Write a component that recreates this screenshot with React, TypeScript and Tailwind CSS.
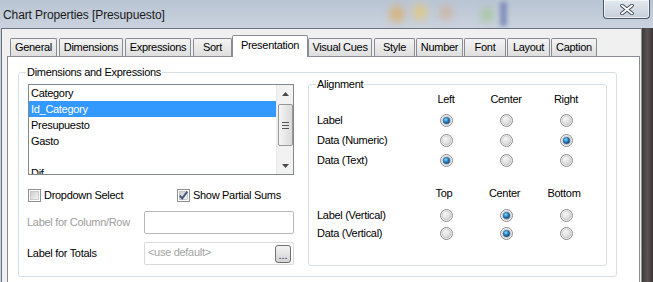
import React from 'react';

const tabs = [
  { label: 'General', cls: 'ml-[8px] w-[47px]' },
  { label: 'Dimensions', cls: 'ml-[2px] w-[64px]' },
  { label: 'Expressions', cls: 'ml-[2px] w-[66px]' },
  { label: 'Sort', cls: 'ml-[2px] w-[39px]' },
  { label: 'Presentation', cls: 'w-[76px]', active: true },
  { label: 'Visual Cues', cls: 'w-[64px]' },
  { label: 'Style', cls: 'ml-[2px] w-[41px]' },
  { label: 'Number', cls: 'ml-[1px] w-[47px]' },
  { label: 'Font', cls: 'ml-[1px] w-[42px]' },
  { label: 'Layout', cls: 'ml-[1px] w-[43px]' },
  { label: 'Caption', cls: 'ml-[1px] w-[46px]' },
];

const fields = ['Category', 'Id_Category', 'Presupuesto', 'Gasto', '', 'Dif'];

const horiz = [
  { label: 'Label', sel: 0 },
  { label: 'Data (Numeric)', sel: 2 },
  { label: 'Data (Text)', sel: 0 },
];

const vert = [
  { label: 'Label (Vertical)', sel: 1 },
  { label: 'Data (Vertical)', sel: 1 },
];

function Radio({ on }: { on?: boolean }) {
  return (
    <svg width="13" height="13" viewBox="0 0 13 13">
      <defs>
        <radialGradient id="rfill" cx="0.35" cy="0.3" r="0.8">
          <stop offset="0" stopColor="#f6f6f6" />
          <stop offset="0.6" stopColor="#e2e2e2" />
          <stop offset="1" stopColor="#c9c9c9" />
        </radialGradient>
        <radialGradient id="rdot" cx="0.4" cy="0.35" r="0.7">
          <stop offset="0" stopColor="#8fdcff" />
          <stop offset="0.45" stopColor="#2b8fd0" />
          <stop offset="1" stopColor="#0c3a66" />
        </radialGradient>
      </defs>
      <circle cx="6.5" cy="6.5" r="6" fill="#fdfdfd" stroke="#8a8c8f" />
      <circle cx="6.5" cy="6.5" r="4.6" fill="url(#rfill)" stroke="#b9b9b9" strokeWidth="0.6" />
      {on && <circle cx="6.5" cy="6.5" r="3.3" fill="url(#rdot)" stroke="#1a4b76" strokeWidth="0.5" />}
    </svg>
  );
}

function Check({ on }: { on?: boolean }) {
  return (
    <svg width="13" height="13" viewBox="0 0 13 13">
      <defs>
        <linearGradient id="cfill" x1="0" y1="0" x2="1" y2="1">
          <stop offset="0" stopColor="#cbcbcb" />
          <stop offset="1" stopColor="#f7f7f7" />
        </linearGradient>
      </defs>
      <rect x="0.5" y="0.5" width="12" height="12" fill="#fbfbfb" stroke="#8e8f8f" />
      <rect x="2.5" y="2.5" width="8" height="8" fill="url(#cfill)" stroke="#b0b0b0" strokeWidth="0.6" />
      {on && <path d="M2.8 6.6 L5.2 9.4 L10.2 2.6" fill="none" stroke="#44587f" strokeWidth="1.9" />}
    </svg>
  );
}

function Arrow({ down }: { down?: boolean }) {
  return (
    <svg width="7" height="4" viewBox="0 0 7 4">
      <path d={down ? 'M0 0 H7 L3.5 4 Z' : 'M0 4 H7 L3.5 0 Z'} fill="#4a4a4a" />
    </svg>
  );
}

export default function App() {
  return (
    <div className="w-[653px] h-[282px] overflow-hidden flex flex-col bg-[#f0f0f0] text-[11px] tracking-[-0.3px] text-black font-['Liberation_Sans',Arial,sans-serif]">
      {/* Title bar */}
      <div className="relative h-[28px] flex items-start justify-between bg-gradient-to-b from-[#b9c4d3] to-[#cad2de] overflow-hidden">
        <div className="absolute left-[390px] top-[6px] w-[14px] h-[16px] rounded-full bg-[#e4a64c] blur-[4px] opacity-70" />
        <div className="absolute left-[414px] top-[4px] w-[12px] h-[16px] rounded-full bg-[#efc85a] blur-[4px] opacity-70" />
        <div className="absolute left-[440px] top-[6px] w-[12px] h-[14px] rounded-full bg-[#dc9d6a] blur-[4px] opacity-50" />
        <div className="absolute left-[482px] top-[8px] w-[10px] h-[14px] rounded-full bg-[#8fc36a] blur-[4px] opacity-60" />
        <div className="absolute left-[500px] top-[2px] w-[7px] h-[24px] bg-[#6a78b0] blur-[2px] opacity-70" />
        <span className="relative pl-[3px] pt-[6px] text-[12px] tracking-[-0.1px] text-[#1a1a1a]">Chart Properties [Presupuesto]</span>
        <div className="relative mr-[3px] w-[47px] h-[19px] rounded-b-[4px] border border-t-0 border-[#4e5866] bg-gradient-to-b from-[#e4e9ef] to-[#c6cfda] shadow-[inset_0_0_0_1px_rgba(255,255,255,0.6)] flex items-center justify-center">
          <svg width="14" height="11" viewBox="0 0 14 11">
            <path d="M2 1.5 L12 9.5 M12 1.5 L2 9.5" stroke="#3a4350" strokeWidth="3.6" strokeLinecap="round" />
            <path d="M2 1.5 L12 9.5 M12 1.5 L2 9.5" stroke="#ffffff" strokeWidth="2" strokeLinecap="round" />
          </svg>
        </div>
      </div>

      {/* Body */}
      <div className="flex-1 flex">
        <div className="w-[2px] bg-[#c8d2de] border-r border-[#69727e]" />
        <div className="flex-1 flex flex-col border-t border-[#6b7480] bg-[#f0f0f0]">
          {/* Tab strip */}
          <div className="mt-[6px] h-[21px] flex items-end">
            {tabs.map((t) =>
              t.active ? (
                <div
                  key={t.label}
                  className={`${t.cls} relative z-10 -mb-px h-[22px] border border-b-0 border-[#898c95] rounded-t-[2px] bg-white flex items-center justify-center pb-[2px]`}
                >
                  {t.label}
                </div>
              ) : (
                <div
                  key={t.label}
                  className={`${t.cls} h-[18px] border border-b-0 border-[#898c95] rounded-t-[2px] bg-gradient-to-b from-[#f4f4f4] to-[#dedede] flex items-center justify-center`}
                >
                  {t.label}
                </div>
              )
            )}
          </div>

          {/* Tab page */}
          <div className="flex-1 ml-[5px] mr-[1px] border border-b-0 border-[#898c95] bg-white">
            <div className="relative ml-[10px] mt-[15px] w-[599px] h-[205px] border border-[#d5dfe5] rounded-[3px]">
              <span className="absolute -top-[8px] left-[7px] bg-white px-[1px] leading-[14px]">Dimensions and Expressions</span>

              <div className="flex pl-[9px] pt-[11px]">
                {/* Left column */}
                <div className="w-[266px] flex flex-col">
                  <div className="h-[91px] border border-[#828790] flex overflow-hidden">
                    <div className="flex-1 flex flex-col">
                      {fields.map((f, i) => (
                        <div
                          key={i}
                          className={`h-[16px] shrink-0 pl-[2px] flex items-center ${i === 1 ? 'bg-[#3399ff] text-white' : ''}`}
                        >
                          {f}
                        </div>
                      ))}
                    </div>
                    <div className="w-[17px] bg-[#f2f2f2] border-l border-[#e8e8e8] flex flex-col items-center">
                      <div className="h-[17px] w-full flex items-center justify-center">
                        <Arrow />
                      </div>
                      <div className="mt-[2px] h-[42px] w-[15px] rounded-[2px] border border-[#979797] bg-gradient-to-r from-[#f5f5f5] to-[#dadada] flex flex-col items-center justify-center gap-[2px]">
                        <div className="w-[7px] h-[1px] bg-[#555]" />
                        <div className="w-[7px] h-[1px] bg-[#555]" />
                        <div className="w-[7px] h-[1px] bg-[#555]" />
                      </div>
                      <div className="flex-1" />
                      <div className="h-[17px] w-full flex items-center justify-center">
                        <Arrow down />
                      </div>
                    </div>
                  </div>

                  <div className="mt-[12px] h-[13px] grid grid-cols-[149px_1fr]">
                    <div className="flex items-center gap-[3px]">
                      <Check />
                      <span>Dropdown Select</span>
                    </div>
                    <div className="flex items-center gap-[3px]">
                      <Check on />
                      <span>Show Partial Sums</span>
                    </div>
                  </div>

                  <div className="mt-[11px] flex items-center -ml-px">
                    <span className="w-[117px] text-[#9d9d9d]">Label for Column/Row</span>
                    <div className="w-[150px] h-[23px] border border-[#b8b8b8] rounded-[2px] bg-white" />
                  </div>

                  <div className="mt-[8px] flex items-center -ml-px">
                    <span className="w-[117px]">Label for Totals</span>
                    <div className="w-[150px] h-[23px] border border-[#d9d9d9] rounded-[2px] bg-white flex items-center justify-between pl-[3px] pr-[2px]">
                      <span className="text-[#a3a3a3] -mt-[3px]">&lt;use default&gt;</span>
                      <div className="w-[16px] h-[18px] rounded-[3px] border border-[#707070] bg-gradient-to-b from-[#f3f3f3] to-[#d4d4d4] flex items-end justify-center pb-[3px]">
                        <span className="text-[#1e2a5a] leading-[8px] tracking-[0px]">...</span>
                      </div>
                    </div>
                  </div>
                </div>

                {/* Alignment group */}
                <div className="relative ml-[14px] w-[299px] h-[182px] border border-[#d5dfe5] rounded-[3px]">
                  <span className="absolute -top-[8px] left-[7px] bg-white px-[1px] leading-[14px]">Alignment</span>
                  <div className="pl-[8px] pt-[6px]">
                    <div className="grid grid-cols-[99px_60px_60px_60px] h-[16px] items-center">
                      <span />
                      <span className="text-center">Left</span>
                      <span className="text-center">Center</span>
                      <span className="text-center">Right</span>
                    </div>
                    <div className="mt-[3px]">
                      {horiz.map((r) => (
                        <div key={r.label} className="grid grid-cols-[99px_60px_60px_60px] h-[20px] items-center">
                          <span>{r.label}</span>
                          {[0, 1, 2].map((c) => (
                            <div key={c} className="flex justify-center">
                              <Radio on={r.sel === c} />
                            </div>
                          ))}
                        </div>
                      ))}
                    </div>
                    <div className="mt-[15px] grid grid-cols-[99px_60px_60px_60px] h-[16px] items-center">
                      <span />
                      <span className="text-center pr-[4px]">Top</span>
                      <span className="text-center pr-[3px]">Center</span>
                      <span className="text-center pr-[4px]">Bottom</span>
                    </div>
                    <div className="mt-[5px]">
                      {vert.map((r) => (
                        <div key={r.label} className="grid grid-cols-[99px_60px_60px_60px] h-[18px] items-center">
                          <span>{r.label}</span>
                          {[0, 1, 2].map((c) => (
                            <div key={c} className="flex justify-center">
                              <Radio on={r.sel === c} />
                            </div>
                          ))}
                        </div>
                      ))}
                    </div>
                  </div>
                </div>
              </div>
            </div>
          </div>
        </div>
        <div className="w-[12px] border-l border-[#8d8d8d] bg-gradient-to-r from-[#3f3a3a] via-[#5a5454] to-[#3a3535]" />
      </div>
    </div>
  );
}
